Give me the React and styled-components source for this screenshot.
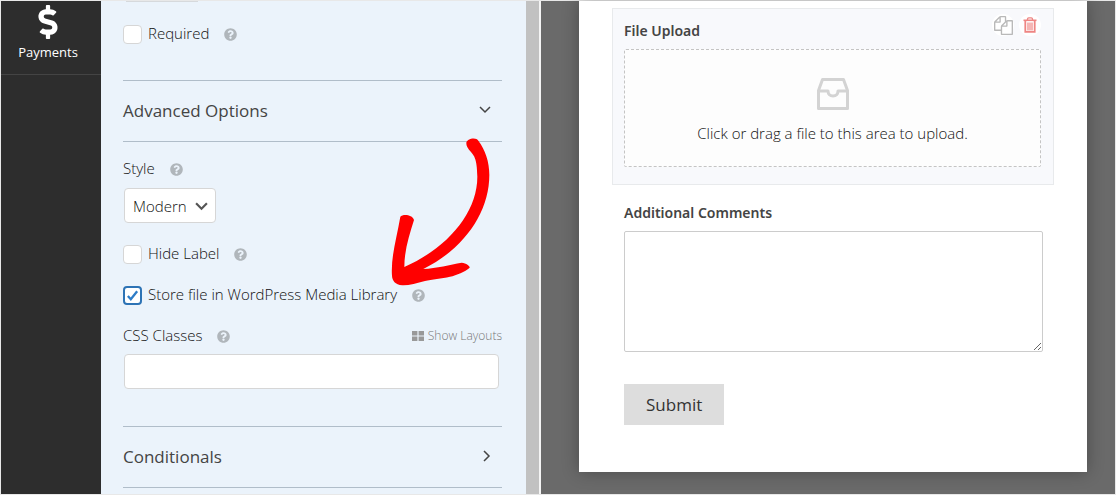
import React, { useState } from 'react';
import styled, { createGlobalStyle } from 'styled-components';
import { FaDollarSign, FaQuestionCircle } from 'react-icons/fa';

const App = () => {
    const [required, setRequired] = useState(false);
    const [hideLabel, setHideLabel] = useState(false);
    const [storeFile, setStoreFile] = useState(true);

    return (
        <Builder>
            <GlobalStyle />
            <Sidebar>
                <SidebarLink href="#payments">
                    <FaDollarSign size={34} />
                    Payments
                </SidebarLink>
            </Sidebar>
            <Settings>
                <Panel>
                    <ClippedField />
                    <CheckRow>
                        <Checkbox id="required" checked={required} onChange={() => setRequired(!required)} />
                        <Label htmlFor="required">Required</Label>
                        <Help />
                    </CheckRow>

                    <GroupToggle type="button" aria-expanded="true" $first>
                        Advanced Options
                        <Chevron d="M0 2l5 5 5-5" />
                    </GroupToggle>

                    <Fields>
                        <LabelRow>
                            <Label htmlFor="style">Style</Label>
                            <Help />
                        </LabelRow>
                        <SelectWrap>
                            <Select id="style" defaultValue="modern">
                                <option value="modern">Modern</option>
                                <option value="classic">Classic</option>
                            </Select>
                            <SelectArrow viewBox="0 0 12 12">
                                <path d="M1 3l5 5 5-5" />
                            </SelectArrow>
                        </SelectWrap>
                        <CheckRow>
                            <Checkbox id="hide-label" checked={hideLabel} onChange={() => setHideLabel(!hideLabel)} />
                            <Label htmlFor="hide-label">Hide Label</Label>
                            <Help />
                        </CheckRow>
                        <CheckRow>
                            <Checkbox id="store-file" checked={storeFile} onChange={() => setStoreFile(!storeFile)} />
                            <Label htmlFor="store-file">Store file in WordPress Media Library</Label>
                            <Help />
                        </CheckRow>
                        <LabelRow>
                            <Label htmlFor="css-classes">CSS Classes</Label>
                            <Help />
                            <LayoutsLink href="#layouts">
                                <svg width="12" height="10" viewBox="0 0 12 10" fill="#999">
                                    <path d="M0 0h5.4v4.4H0zM6.6 0H12v4.4H6.6zM0 5.6h5.4V10H0zM6.6 5.6H12V10H6.6z" />
                                </svg>
                                Show Layouts
                            </LayoutsLink>
                        </LabelRow>
                        <TextInput id="css-classes" type="text" />
                    </Fields>

                    <GroupToggle type="button" aria-expanded="false">
                        Conditionals
                        <Chevron d="M4 0l5 5-5 5" />
                    </GroupToggle>

                    <Arrow viewBox="60 51 300 450">
                        <path d="M289 70C288 56 319 50 325 62C346 90 358 125 358 165C358 275 285 385 160 447C200 445 240 434 275 428C290 430 300 438 299 443C285 455 260 466 240 470C215 476 185 478 165 483C140 490 115 497 97 496C75 494 67 482 66 468C62 410 80 355 91 290C98 282 127 283 132 300C118 345 103 390 103 441C230 385 322 280 322 170C321 112 312 106 297 89C292 83 289 77 289 70Z" />
                    </Arrow>
                </Panel>
                <Scrollbar />
            </Settings>
            <Preview>
                <Form onSubmit={(e) => e.preventDefault()}>
                    <ActiveField>
                        <FieldLabel htmlFor="upload">File Upload</FieldLabel>
                        <Actions>
                            <ActionButton type="button" aria-label="Duplicate field">
                                <svg width="19" height="19" viewBox="0 0 1792 1792" fill="#b9b9b9">
                                    <path d="M1696 384q40 0 68 28t28 68v1216q0 40-28 68t-68 28h-960q-40 0-68-28t-28-68v-288h-544q-40 0-68-28t-28-68v-672q0-40 20-88t48-76l408-408q28-28 76-48t88-20h416q40 0 68 28t28 68v328q68-40 128-40h416zm-544 213l-299 299h299v-299zm-640-384l-299 299h299v-299zm196 647l316-316v-416h-384v416q0 40-28 68t-68 28h-416v640h512v-256q0-40 20-88t48-76zm956 804v-1152h-384v416q0 40-28 68t-68 28h-416v640h896z" />
                                </svg>
                            </ActionButton>
                            <ActionButton type="button" aria-label="Delete field">
                                <svg width="14" height="16" viewBox="0 0 14 16" fill="none" stroke="#ee8583">
                                    <path d="M4.500 3V2a1.200 1.200 0 0 1 1.200-1.200h2.600A1.200 1.200 0 0 1 9.500 2v1" strokeWidth="1.300" />
                                    <path d="M0.500 3.300h13" strokeWidth="1.600" />
                                    <path d="M2.300 4v10.800h9.400V4" strokeWidth="1.800" />
                                    <path d="M5 5.500v8M7 5.500v8M9 5.500v8" strokeWidth="1.200" />
                                </svg>
                            </ActionButton>
                        </Actions>
                        <DropZone type="button" id="upload">
                            <svg width="32" height="32" viewBox="0 0 32 32" fill="none" stroke="#d3d3d3" strokeWidth="3" strokeLinejoin="round">
                                <path d="M1.500 12.500L5.500 1.500h21l4 11v18h-29z" />
                                <path d="M1.500 13h9.500c0 3 2 5 5 5s5-2 5-5h9.500" />
                            </svg>
                            Click or drag a file to this area to upload.
                        </DropZone>
                    </ActiveField>
                    <Field>
                        <FieldLabel htmlFor="comments">Additional Comments</FieldLabel>
                        <TextArea id="comments" />
                    </Field>
                    <Submit type="submit">Submit</Submit>
                </Form>
            </Preview>
        </Builder>
    );
};

const Help = () => <HelpIcon size={13} title="Help" />;

const Checkbox = (props) => (
    <CheckWrap>
        <CheckInput type="checkbox" {...props} />
        {props.checked && (
            <CheckMark viewBox="0 0 14 14">
                <path d="M2 7.500l3.200 3.500L12 2.500" />
            </CheckMark>
        )}
    </CheckWrap>
);

const Chevron = ({ d }) => (
    <ChevronIcon viewBox="0 0 12 12">
        <path d={d} />
    </ChevronIcon>
);

const GlobalStyle = createGlobalStyle`
    *, *::before, *::after {
        box-sizing: border-box;
    }

    body {
        margin: 0;
        color: #111;
        font-size: 15px;
        font-weight: 300;
        line-height: 20px;
        font-family: 'Segoe UI', 'Open Sans', sans-serif;
    }

    button, input, select, textarea {
        font: inherit;
        color: inherit;
    }
`;

const Builder = styled.div`
    display: grid;
    grid-template-columns: 100px minmax(0, 438fr) minmax(0, 576fr);
    min-height: 100vh;
    border: 1px solid #e8e8e8;
`;

const Sidebar = styled.nav`
    background: #2d2d2d;
`;

const SidebarLink = styled.a`
    display: flex;
    flex-direction: column;
    align-items: center;
    gap: 4px;
    padding: 4px 6px 13px 0;
    border-bottom: 1px solid #444;
    color: #fff;
    font-size: 13px;
    font-weight: 400;
    line-height: 18px;
    text-decoration: none;
`;

const Settings = styled.section`
    display: flex;
`;

const Panel = styled.div`
    position: relative;
    flex: 1;
    min-width: 0;
    padding: 0 24px 0 22px;
    background: #ebf3fb;
`;

/* bottom edge of the field scrolled out above */
const ClippedField = styled.div`
    width: 72px;
    height: 1px;
    margin-left: 3px;
    background: #d6d9dc;
`;

const CheckRow = styled.div`
    display: flex;
    align-items: center;
    height: 20px;
    margin-top: 21px;

    ${ClippedField} + & {
        margin-top: 22px;
    }
`;

const CheckWrap = styled.span`
    position: relative;
    display: flex;
    width: 19px;
    height: 19px;
    margin-right: 6px;
`;

const CheckInput = styled.input`
    appearance: none;
    width: 100%;
    height: 100%;
    margin: 0;
    border: 1px solid #d6d6d6;
    border-radius: 4px;
    background: #fff;

    &:checked {
        border: 2px solid #2d73b5;
    }
`;

const CheckMark = styled.svg`
    position: absolute;
    inset: 3px;
    fill: none;
    stroke: #2d7cc7;
    stroke-width: 2.500;
    pointer-events: none;
`;

const Label = styled.label`
    padding-bottom: 2px;
`;

const HelpIcon = styled(FaQuestionCircle)`
    margin-left: 15px;
    color: #b0b6bb;
`;

const LabelRow = styled.div`
    display: flex;
    align-items: center;
    height: 20px;
`;

const GroupToggle = styled.button`
    display: flex;
    align-items: center;
    justify-content: space-between;
    width: 100%;
    height: 62px;
    margin-top: ${(props) => (props.$first ? '36px' : '37px')};
    padding: 0 10px 0 0;
    border: solid #b0bdc9;
    border-width: 1px 0;
    background: none;
    color: #444;
    font-size: 17px;
    font-weight: 400;
    text-align: left;
`;

const ChevronIcon = styled.svg`
    width: 12px;
    height: 12px;
    fill: none;
    stroke: #444;
    stroke-width: 1.500;
    overflow: visible;
`;

const Fields = styled.div`
    padding-top: 17px;

    ${LabelRow} {
        margin-bottom: 9px;
    }

    ${CheckRow} + ${LabelRow} {
        margin-top: 21px;
        margin-bottom: 8px;
    }
`;

const SelectWrap = styled.div`
    position: relative;
    width: 92px;
    margin-left: 1px;
`;

const Select = styled.select`
    appearance: none;
    display: block;
    width: 100%;
    height: 35px;
    padding: 0 8px;
    border: 1px solid #d6d6d6;
    border-radius: 4px;
    background: #fff;
`;

const SelectArrow = styled.svg`
    position: absolute;
    top: 12px;
    right: 8px;
    width: 13px;
    height: 13px;
    fill: none;
    stroke: #555;
    stroke-width: 2;
    pointer-events: none;
`;

const LayoutsLink = styled.a`
    display: flex;
    align-items: center;
    gap: 4px;
    margin-left: auto;
    color: #777;
    font-size: 12px;
    text-decoration: none;
`;

const TextInput = styled.input`
    display: block;
    width: calc(100% - 4px);
    height: 35px;
    margin-left: 1px;
    padding: 0 10px;
    border: 1px solid #d6d6d6;
    border-radius: 4px;
    background: #fff;
`;

const Arrow = styled.svg`
    position: absolute;
    top: 136px;
    right: 36px;
    width: 100px;
    height: 150px;
    fill: #f00;
    pointer-events: none;
`;

const Scrollbar = styled.div`
    width: 13px;
    background: #c1c1c1;
`;

const Preview = styled.main`
    padding: 0 28px 22px 38px;
    border-left: 2px solid #f4f4f4;
    background: #6a6a6a;
`;

const Form = styled.form`
    padding: 7px 33px 47px;
    background: #fff;
    box-shadow: 0 0 16px rgba(0, 0, 0, 0.3);
`;

const ActiveField = styled.div`
    position: relative;
    padding: 12px 12px 17px 11px;
    border: 1px solid #e8eaec;
    background: #f8f9fc;
`;

const Field = styled.div`
    padding: 18px 11px 0 12px;
`;

const FieldLabel = styled.label`
    display: block;
    margin-bottom: 8px;
    color: #444;
    font-family: 'Segoe UI', 'Noto Sans', sans-serif;
    font-size: 14px;
    font-weight: 600;
`;

const Actions = styled.div`
    position: absolute;
    top: 5px;
    right: 12px;
    display: flex;
    gap: 5px;
`;

const ActionButton = styled.button`
    display: flex;
    align-items: center;
    justify-content: center;
    width: 22px;
    height: 22px;
    padding: 0;
    border: 0;
    border-radius: 50%;
    background: #fff;
`;

const DropZone = styled.button`
    display: flex;
    flex-direction: column;
    align-items: center;
    gap: 13px;
    width: 100%;
    padding: 28px 16px 23px;
    border: 1px dashed #c4c4c4;
    border-radius: 2px;
    background: #fdfdfd;
`;

const TextArea = styled.textarea`
    display: block;
    width: 100%;
    height: 121px;
    padding: 8px;
    border: 1px solid #ccc;
    border-radius: 2px;
    background: #fff;
`;

const Submit = styled.button`
    display: block;
    height: 41px;
    margin: 32px 0 0 12px;
    padding: 0 22px;
    border: 0;
    background: #ddd;
    color: #333;
    font-size: 17px;
    font-weight: 400;
`;

export default App;
